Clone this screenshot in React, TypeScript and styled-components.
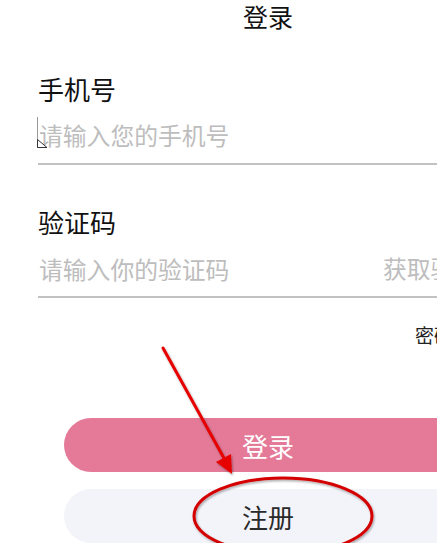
import { styled, createGlobalStyle } from 'styled-components'

const GlobalStyle = createGlobalStyle`
  html, body {
    margin: 0;
    padding: 0;
    background: #ffffff;
    overflow: hidden;
  }
  body {
    font-family: "Noto Sans CJK SC", "Noto Sans", sans-serif;
  }
`

type FieldProps = {
  label: string
  placeholder: string
  action?: string
  caret?: boolean
  $labelGap: number
  $padBottom: number
}

function Field({ label, placeholder, action, caret, $labelGap, $padBottom }: FieldProps) {
  return (
    <FieldRoot>
      <Label>{label}</Label>
      <InputRow $gap={$labelGap} $padBottom={$padBottom}>
        {caret && (
          <Caret>
            <svg width="11" height="9" viewBox="0 0 11 9">
              <path d="M0.5 0.5 L0.5 8.5 L10 8.5 Z" fill="#fff" stroke="#333" strokeWidth="1" />
            </svg>
          </Caret>
        )}
        <Input placeholder={placeholder} />
        {action && <CodeButton>{action}</CodeButton>}
      </InputRow>
    </FieldRoot>
  )
}

export default function App() {
  return (
    <>
      <GlobalStyle />
      <Page>
        <Header>登录</Header>
        <Form>
          <Field label="手机号" placeholder="请输入您的手机号" caret $labelGap={15} $padBottom={14} />
          <Field label="验证码" placeholder="请输入你的验证码" action="获取验证码" $labelGap={16} $padBottom={13} />
          <SwitchLink>密码登录</SwitchLink>
          <Actions>
            <Button $variant="primary">登录</Button>
            <Button $variant="secondary">注册</Button>
          </Actions>
        </Form>
        <Annotation width="536" height="560" viewBox="0 0 536 560">
          <defs>
            <filter id="shadow" x="-20%" y="-20%" width="140%" height="140%">
              <feDropShadow dx="1" dy="1.5" stdDeviation="1.2" floodColor="#000" floodOpacity="0.35" />
            </filter>
          </defs>
          <g filter="url(#shadow)">
            <line x1="163" y1="348" x2="225" y2="460" stroke="#e60000" strokeWidth="3" strokeLinecap="round" />
            <polygon points="232,474 216,462 231,454" fill="#e60000" />
            <ellipse cx="283" cy="516" rx="89" ry="38" fill="none" stroke="#d40000" strokeWidth="3" />
          </g>
        </Annotation>
      </Page>
    </>
  )
}

const Page = styled.div`
  position: relative;
  width: 536px;
  box-sizing: border-box;
  padding: 0 38px;
`

const Header = styled.div`
  height: 32px;
  display: flex;
  align-items: center;
  justify-content: center;
  font-size: 25px;
  color: #111;
`

const Form = styled.div`
  display: flex;
  flex-direction: column;
`

const FieldRoot = styled.div`
  display: flex;
  flex-direction: column;
  margin-top: 42px;
`

const Label = styled.div`
  font-size: 26px;
  line-height: 30px;
  color: #111;
`

const InputRow = styled.div<{ $gap: number; $padBottom: number }>`
  position: relative;
  display: flex;
  align-items: center;
  margin-top: ${({ $gap }) => $gap}px;
  padding-bottom: ${({ $padBottom }) => $padBottom}px;
  border-bottom: 2px solid #c2c2c2;
`

const Input = styled.input`
  flex: 1;
  min-width: 0;
  height: 30px;
  padding: 0 0 0 1px;
  border: none;
  outline: none;
  background: transparent;
  font-family: inherit;
  font-size: 23.8px;
  color: #333;

  &::placeholder {
    color: #bdbdbd;
  }
`

const Caret = styled.div`
  position: absolute;
  left: -1px;
  top: -2px;
  width: 11px;
  height: 31px;
  border-left: 1.5px solid #9a9a9a;
  box-sizing: border-box;

  svg {
    position: absolute;
    left: -1.5px;
    bottom: 0;
  }
`

const CodeButton = styled.span`
  margin-right: -4px;
  font-size: 23.8px;
  line-height: 30px;
  color: #bdbdbd;
  white-space: nowrap;
`

const SwitchLink = styled.div`
  align-self: flex-end;
  margin-top: 25px;
  margin-right: 7px;
  font-size: 19px;
  line-height: 24px;
  color: #222;
`

const Actions = styled.div`
  display: flex;
  flex-direction: column;
  gap: 17px;
  margin-top: 71px;
  padding: 0 26px;
`

const Button = styled.button<{ $variant: 'primary' | 'secondary' }>`
  height: 54px;
  border: none;
  border-radius: 27px;
  font-family: inherit;
  font-size: 26px;
  background: ${({ $variant }) => ($variant === 'primary' ? '#e47a98' : '#f3f4fa')};
  color: ${({ $variant }) => ($variant === 'primary' ? '#ffffff' : '#2a2a2a')};
  cursor: pointer;
`

const Annotation = styled.svg`
  position: absolute;
  left: 0;
  top: 0;
  pointer-events: none;
`
